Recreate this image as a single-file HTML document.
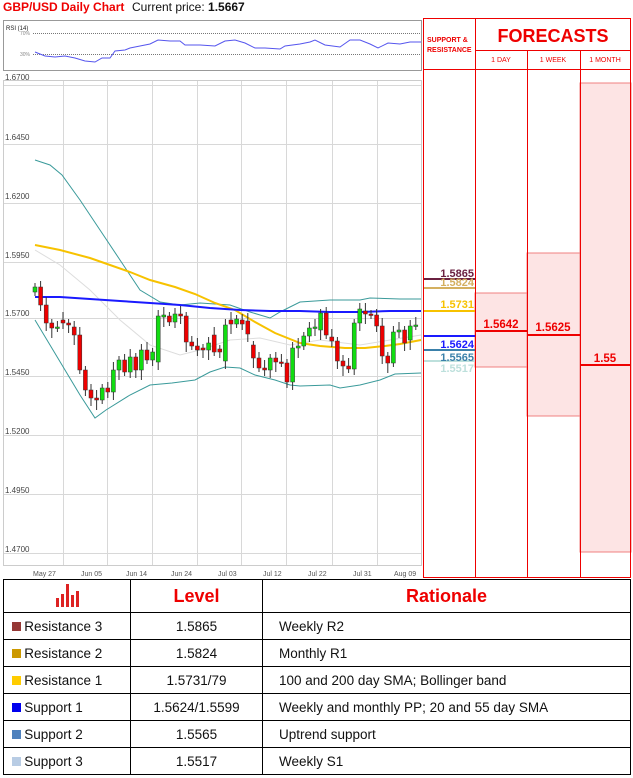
<!DOCTYPE html>
<html><head><meta charset="utf-8">
<style>
body{margin:0;width:633px;height:778px;background:#fff;font-family:"Liberation Sans",sans-serif;position:relative;overflow:hidden}
.t{position:absolute;white-space:nowrap}
table{position:absolute;left:3px;top:579px;border-collapse:collapse;width:628px}
td{border:1px solid #000;font-size:13.5px;height:26px;padding:0;color:#111}
</style></head><body>
<div class="t" style="left:3px;top:0px;font-size:12px;color:#e00;font-weight:bold;font-family:'Liberation Sans Narrow','Liberation Sans',sans-serif">GBP/USD Daily Chart</div>
<div class="t" style="left:132px;top:0px;font-size:12px;color:#111">Current price: <b>1.5667</b></div>
<svg id="s" width="633" height="778" style="position:absolute;left:0;top:0" xmlns="http://www.w3.org/2000/svg">
<rect x="3.5" y="20.5" width="418" height="50" fill="#fff" stroke="#999"/>
<text x="6" y="30" font-size="6" fill="#222" font-family="Liberation Sans">RSI (14)</text>
<text x="20" y="35" font-size="5" fill="#888">70%</text><text x="20" y="56" font-size="5" fill="#888">30%</text>
<line x1="33" y1="33.5" x2="421" y2="33.5" stroke="#777" stroke-dasharray="1,1"/>
<line x1="33" y1="54.5" x2="421" y2="54.5" stroke="#777" stroke-dasharray="1,1"/>
<polyline fill="none" stroke="#55e" stroke-width="1" points="35,52 45,56 55,57 65,56 75,58 85,61 95,62 102,58 110,58 115,51 125,50 130,48 140,46 150,44 158,40 170,41 180,41 185,45 200,45 215,46 225,41 235,40 245,43 255,48 265,48 280,49 285,46 300,44 310,42 315,40 325,45 340,47 350,40 360,40 370,44 378,48 388,43 400,44 410,42 421,42"/>
<rect x="3.5" y="80.5" width="418" height="485" fill="#fff" stroke="#ccc"/>
<g id="grid" stroke="#d8d8d8"></g>
<g font-size="8" fill="#444" font-family="Liberation Sans">
<text x="5" y="80">1.6700</text><text x="5" y="140">1.6450</text><text x="5" y="199">1.6200</text><text x="5" y="258">1.5950</text><text x="5" y="316">1.5700</text><text x="5" y="375">1.5450</text><text x="5" y="434">1.5200</text><text x="5" y="493">1.4950</text><text x="5" y="552">1.4700</text>
</g>
<g font-size="7" fill="#555" font-family="Liberation Sans">
<text x="33" y="576">May 27</text><text x="81" y="576">Jun 05</text><text x="126" y="576">Jun 14</text><text x="171" y="576">Jun 24</text><text x="218" y="576">Jul 03</text><text x="263" y="576">Jul 12</text><text x="308" y="576">Jul 22</text><text x="353" y="576">Jul 31</text><text x="394" y="576">Aug 09</text>
</g>
<polyline fill="none" stroke="#ddd" stroke-width="1" points="35,250 60,265 90,290 120,320 150,345 180,355 200,350 230,340 260,338 290,345 320,340 360,345 390,340 421,335"/>
<polyline fill="none" stroke="#3a9a9a" stroke-width="1" points="35,160 50,165 62,175 80,200 100,230 120,260 140,290 160,302 180,305 200,303 230,305 250,312 270,318 280,312 300,302 330,300 360,300 370,298 400,299 421,299"/>
<polyline fill="none" stroke="#3a9a9a" stroke-width="1" points="35,320 50,345 62,365 80,395 95,418 106,410 130,395 150,385 172,383 195,380 210,372 225,367 240,368 255,375 275,380 290,385 300,386 330,385 340,388 360,385 380,380 395,374 421,373"/>
<polyline fill="none" stroke="#f7c200" stroke-width="2" points="35,245 60,250 90,258 110,265 130,272 150,280 175,287 195,294 215,303 235,310 255,322 275,333 300,343 320,346 345,348 365,348 385,346 400,344 421,340"/>
<polyline fill="none" stroke="#1a1aff" stroke-width="2" points="35,297 60,297 90,299 120,301 150,303 180,305 210,308 240,310 270,311 300,311 330,312 360,312 390,311 421,311"/>
<g id="cd"></g>
<rect x="475" y="293" width="52" height="74" fill="#fde4e4" stroke="#f08080"/>
<rect x="527" y="253" width="53" height="163" fill="#fde4e4" stroke="#f08080"/>
<rect x="580" y="83" width="51" height="469" fill="#fde4e4" stroke="#f08080"/>
<g stroke="#e00" fill="none">
<rect x="423.5" y="18.5" width="207" height="559"/>
<line x1="475.5" y1="18" x2="475.5" y2="578"/>
<line x1="475" y1="50.5" x2="631" y2="50.5"/>
<line x1="423" y1="69.5" x2="631" y2="69.5"/>
<line x1="527.5" y1="50" x2="527.5" y2="578"/>
<line x1="580.5" y1="50" x2="580.5" y2="578"/>
</g>
<text x="427" y="42" font-size="7" font-weight="bold" fill="#e00">SUPPORT &amp;</text>
<text x="427" y="52" font-size="7" font-weight="bold" fill="#e00">RESISTANCE</text>
<text x="553" y="42" font-size="18" font-weight="bold" fill="#e00" text-anchor="middle" font-family="Liberation Sans Narrow,Liberation Sans">FORECASTS</text>
<g font-size="7" fill="#e00" text-anchor="middle"><text x="501" y="62">1 DAY</text><text x="553" y="62">1 WEEK</text><text x="605" y="62">1 MONTH</text></g>
<g stroke-width="2">
<line x1="424" y1="279" x2="475" y2="279" stroke="#6a2040"/>
<line x1="424" y1="288" x2="475" y2="288" stroke="#d4b060"/>
<line x1="424" y1="311" x2="475" y2="311" stroke="#f7c200"/>
<line x1="424" y1="336" x2="475" y2="336" stroke="#1a1aff"/>
<line x1="424" y1="350" x2="475" y2="350" stroke="#3a80aa"/>
<line x1="424" y1="361" x2="475" y2="361" stroke="#bde0dc"/>
<line x1="476" y1="331" x2="527" y2="331" stroke="#e00"/>
<line x1="528" y1="335" x2="580" y2="335" stroke="#e00"/>
<line x1="581" y1="365" x2="631" y2="365" stroke="#e00"/>
</g>
<g font-size="11" font-weight="bold" text-anchor="end">
<text x="474" y="277" fill="#6a2040">1.5865</text>
<text x="474" y="286" fill="#d4b060">1.5824</text>
<text x="474" y="308" fill="#f7c200">1.5731</text>
<text x="474" y="348" fill="#1a1aff">1.5624</text>
<text x="474" y="361" fill="#3a80aa">1.5565</text>
<text x="474" y="372" fill="#bde0dc">1.5517</text>
</g>
<g font-size="11.5" font-weight="bold" fill="#e00" text-anchor="middle">
<text x="501" y="328">1.5642</text><text x="553" y="331">1.5625</text><text x="605" y="362">1.55</text>
</g>
</svg>
<table>
<tr style="height:33px"><td style="width:126px;text-align:center"><svg width="26" height="26"><g fill="#d22"><rect x="2" y="16" width="3" height="9"/><rect x="7" y="12" width="3" height="13"/><rect x="12" y="2" width="3" height="23"/><rect x="17" y="13" width="3" height="12"/><rect x="22" y="9" width="3" height="16"/></g></svg></td>
<td style="width:131px;text-align:center;color:#e00;font-weight:bold;font-size:18px">Level</td>
<td style="text-align:center;color:#e00;font-weight:bold;font-size:18px">Rationale</td></tr>
<tr><td>&nbsp;&nbsp;<span style="display:inline-block;width:9px;height:9px;background:#953735"></span>&nbsp;Resistance 3</td><td style="text-align:center">1.5865</td><td style="padding-left:16px">Weekly R2</td></tr>
<tr><td>&nbsp;&nbsp;<span style="display:inline-block;width:9px;height:9px;background:#cc9900"></span>&nbsp;Resistance 2</td><td style="text-align:center">1.5824</td><td style="padding-left:16px">Monthly R1</td></tr>
<tr><td>&nbsp;&nbsp;<span style="display:inline-block;width:9px;height:9px;background:#ffcc00"></span>&nbsp;Resistance 1</td><td style="text-align:center">1.5731/79</td><td style="padding-left:16px">100 and 200 day SMA; Bollinger band</td></tr>
<tr><td>&nbsp;&nbsp;<span style="display:inline-block;width:9px;height:9px;background:#0000ee"></span>&nbsp;Support 1</td><td style="text-align:center">1.5624/1.5599</td><td style="padding-left:16px">Weekly and monthly PP; 20 and 55 day SMA</td></tr>
<tr><td>&nbsp;&nbsp;<span style="display:inline-block;width:9px;height:9px;background:#4f81bd"></span>&nbsp;Support 2</td><td style="text-align:center">1.5565</td><td style="padding-left:16px">Uptrend support</td></tr>
<tr><td>&nbsp;&nbsp;<span style="display:inline-block;width:9px;height:9px;background:#b8cce4"></span>&nbsp;Support 3</td><td style="text-align:center">1.5517</td><td style="padding-left:16px">Weekly S1</td></tr>
</table>
<script>
var NS="http://www.w3.org/2000/svg";
var g=document.getElementById("grid");
[63,107,152,197,241,286,332,377].forEach(function(x){var l=document.createElementNS(NS,"line");l.setAttribute("x1",x+.5);l.setAttribute("x2",x+.5);l.setAttribute("y1",81);l.setAttribute("y2",565);g.appendChild(l);});
[85,144,203,262,318,376,435,494,553].forEach(function(y){var l=document.createElementNS(NS,"line");l.setAttribute("x1",4);l.setAttribute("x2",421);l.setAttribute("y1",y+.5);l.setAttribute("y2",y+.5);g.appendChild(l);});
var c=[[292,287],[287,305],[305,323],[323,328],[328,327],[320,323],[323,325],[327,335],[335,370],[370,390],[390,398],[398,400],[400,388],[388,392],[392,370],[370,360],[360,372],[372,357],[357,370],[370,350],[350,360],[360,352],[362,316],[317,315],[316,322],[322,314],[314,316],[316,342],[342,346],[346,350],[348,350],[350,343],[335,352],[349,352],[361,325],[320,324],[324,319],[320,324],[321,334],[345,358],[358,368],[368,370],[370,358],[358,362],[362,363],[363,382],[382,348],[348,346],[346,336],[336,328],[328,327],[330,313],[313,335],[337,341],[341,361],[361,366],[366,369],[369,323],[323,309],[311,314],[314,315],[315,326],[326,356],[356,363],[363,332],[332,330],[330,343],[340,326],[326,325]];
var cd=document.getElementById("cd");
c.forEach(function(v,i){var x=33+i*5.6;var o=v[0],cl=v[1];var top=Math.min(o,cl),bot=Math.max(o,cl);var up=cl<o;
var w=document.createElementNS(NS,"line");w.setAttribute("x1",x+2);w.setAttribute("x2",x+2);w.setAttribute("y1",top-4-(i%3)*2);w.setAttribute("y2",bot+4+(i%4)*2);w.setAttribute("stroke","#333");cd.appendChild(w);
var r=document.createElementNS(NS,"rect");r.setAttribute("x",x);r.setAttribute("y",top);r.setAttribute("width",4);r.setAttribute("height",Math.max(bot-top,1.5));r.setAttribute("fill",up?"#1d1":"#e00");r.setAttribute("stroke","#333");r.setAttribute("stroke-width","0.5");cd.appendChild(r);});
</script>
</body></html>
